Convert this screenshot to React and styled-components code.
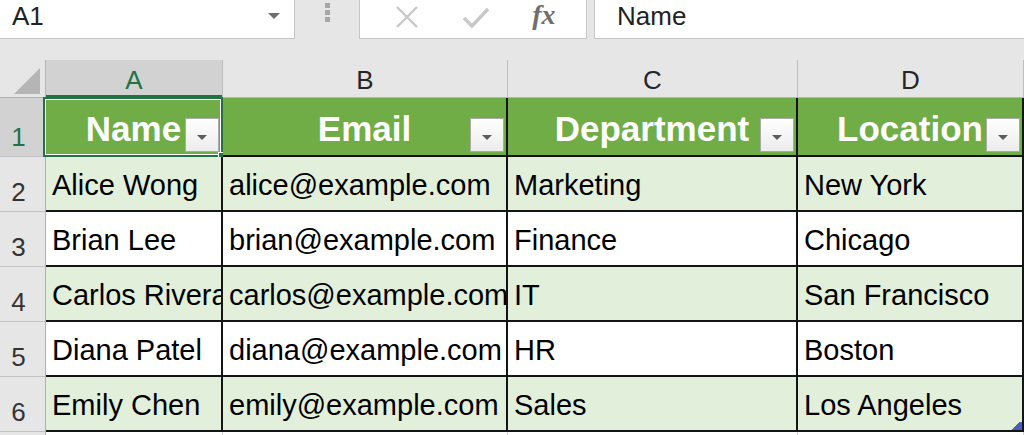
import React from "react"
import styled, { createGlobalStyle } from "styled-components"

const Global = createGlobalStyle`
body{
  margin:0;
  background:#e6e6e6;
  font-family:"Liberation Sans", Arial, sans-serif;
  overflow:hidden;
}
`

const COLS = "46px 177px 285px 290px 1fr"

const Page = styled.div`
width:1024px;
height:435px;
overflow:hidden;
background:#e6e6e6;
`

const FormulaBar = styled.div`
height:39px;
display:flex;
align-items:stretch;
margin-bottom:21px;
`
const NameBox = styled.div`
width:295px;
background:#fff;
border-right:1px solid #c6c6c6;
border-bottom:1px solid #c6c6c6;
display:flex;
align-items:center;
justify-content:space-between;
padding:0 14px 5px 12px;
box-sizing:border-box;
font-size:26px;
color:#222;
`
const Caret = styled.span`
width:0;
height:0;
border-left:6px solid transparent;
border-right:6px solid transparent;
border-top:6px solid #6e6e6e;
margin-top:-2px;
`
const Grip = styled.div`
width:64px;
display:flex;
flex-direction:column;
align-items:center;
gap:2px;
padding-top:3px;
span{
  width:5px;
  height:5px;
  background:#a6a6a6;
}
`
const ButtonBox = styled.div`
width:228px;
background:#fff;
border:1px solid #c6c6c6;
border-top:none;
display:flex;
align-items:center;
justify-content:space-around;
padding:0 10px 5px 14px;
box-sizing:border-box;
`
const FxButton = styled.span`
font-family:"Liberation Serif", "Times New Roman", serif;
font-style:italic;
font-weight:bold;
font-size:28px;
color:#6f6f6f;
margin-top:-4px;
`
const FormulaInput = styled.div`
flex:1;
margin-left:7px;
background:#fff;
border-left:1px solid #c6c6c6;
border-bottom:1px solid #c6c6c6;
display:flex;
align-items:center;
padding:0 0 5px 22px;
font-size:26px;
color:#222;
`

const ColHeaders = styled.div`
display:grid;
grid-template-columns:${COLS};
height:38px;
border-bottom:1px solid #b4b4b4;
box-sizing:border-box;
`
const Corner = styled.div`
position:relative;
border-right:1px solid #b4b4b4;
&::after{
  content:"";
  position:absolute;
  left:14px;
  top:8px;
  border-left:26px solid transparent;
  border-bottom:26px solid #b5b5b5;
}
`
const ColHead = styled.div`
display:flex;
align-items:center;
justify-content:center;
padding-top:3px;
font-size:26px;
color:${p => (p.$active ? "#217346" : "#262626")};
background:${p => (p.$active ? "#d2d2d2" : "#e6e6e6")};
border-right:1px solid #bdbdbd;
box-sizing:border-box;
box-shadow:${p => (p.$active ? "inset 0 -2px 0 #217346" : "none")};
`

const Row = styled.div`
display:grid;
grid-template-columns:${COLS};
height:${p => p.$h}px;
`
const RowHead = styled.div`
display:flex;
align-items:flex-end;
justify-content:center;
padding:0 8px 3px 0;
box-sizing:border-box;
font-size:26px;
color:${p => (p.$active ? "#217346" : "#333")};
background:${p => (p.$active ? "#d2d2d2" : "#e6e6e6")};
border-right:1px solid #b0b0b0;
border-bottom:1px solid #c2c2c2;
`
const HeadCell = styled.div`
position:relative;
display:flex;
align-items:flex-end;
justify-content:center;
padding-bottom:6px;
box-sizing:border-box;
background:#70ad47;
color:#fff;
font-weight:bold;
font-size:35px;
line-height:40px;
white-space:nowrap;
border-right:2px solid #141414;
border-bottom:2px solid #141414;
`
const HeadLabel = styled.span`
position:relative;
`
const Filter = styled.span`
position:absolute;
right:2px;
bottom:3px;
width:34px;
height:34px;
box-sizing:border-box;
border:1px solid #a9a9a9;
background:linear-gradient(#ffffff, #ececec);
display:flex;
align-items:center;
justify-content:center;
&::after{
  content:"";
  border-left:5px solid transparent;
  border-right:5px solid transparent;
  border-top:5px solid #5c5c5c;
  margin-top:4px;
}
`
const Cell = styled.div`
position:relative;
display:flex;
align-items:flex-end;
padding:0 0 8px 6px;
box-sizing:border-box;
background:${p => (p.$band ? "#e2efda" : "#ffffff")};
color:#000;
font-size:29px;
line-height:33px;
white-space:nowrap;
overflow:hidden;
border-right:2px solid #141414;
border-bottom:2px solid #141414;
`
const Selection = styled.span`
position:absolute;
top:-1px;
left:-3px;
right:-2px;
bottom:-2px;
border:2px solid #217346;
box-shadow:inset 0 0 0 1px #fff;
pointer-events:none;
`
const FillHandle = styled.span`
position:absolute;
right:-6px;
bottom:-6px;
width:7px;
height:7px;
background:#217346;
border:1px solid #fff;
`
const ResizeMark = styled.span`
position:absolute;
right:0;
bottom:0;
width:12px;
height:8px;
background:linear-gradient(135deg, transparent 50%, #4b5db8 50%);
`
const BottomStrip = styled.div`
display:grid;
grid-template-columns:${COLS};
height:4px;
div:first-child{ border-right:1px solid #b0b0b0; }
div:not(:first-child){ background:#fff; border-right:1px solid #d4d4d4; }
`

const headers = ["Name", "Email", "Department", "Location"]
const people = [
  ["Alice Wong", "alice@example.com", "Marketing", "New York"],
  ["Brian Lee", "brian@example.com", "Finance", "Chicago"],
  ["Carlos Rivera", "carlos@example.com", "IT", "San Francisco"],
  ["Diana Patel", "diana@example.com", "HR", "Boston"],
  ["Emily Chen", "emily@example.com", "Sales", "Los Angeles"],
]

function Cross(){
  return (
    <svg width="26" height="26" viewBox="0 0 26 26">
      <path d="M3 3 L23 23 M23 3 L3 23" stroke="#c8c8c8" strokeWidth="2.4" fill="none" />
    </svg>
  )
}
function Check(){
  return (
    <svg width="30" height="26" viewBox="0 0 30 26">
      <path d="M3 14 L11 22 L27 5" stroke="#c8c8c8" strokeWidth="3.4" fill="none" />
    </svg>
  )
}

export default function App(){
  return (
    <Page>
      <Global />
      <FormulaBar>
        <NameBox>A1<Caret /></NameBox>
        <Grip><span /><span /><span /></Grip>
        <ButtonBox><Cross /><Check /><FxButton>fx</FxButton></ButtonBox>
        <FormulaInput>Name</FormulaInput>
      </FormulaBar>

      <ColHeaders>
        <Corner />
        {["A", "B", "C", "D"].map((l, i) => (
          <ColHead key={l} $active={i === 0}>{l}</ColHead>
        ))}
      </ColHeaders>

      <Row $h={59}>
        <RowHead $active>1</RowHead>
        {headers.map((h, i) => (
          <HeadCell key={h}>
            <HeadLabel>{h}</HeadLabel>
            <Filter />
            {i === 0 && <Selection><FillHandle /></Selection>}
          </HeadCell>
        ))}
      </Row>

      {people.map((p, r) => (
        <Row key={p[0]} $h={55}>
          <RowHead>{r + 2}</RowHead>
          {p.map((v, c) => (
            <Cell key={c} $band={r % 2 === 0}>
              {v}
              {r === people.length - 1 && c === 3 && <ResizeMark />}
            </Cell>
          ))}
        </Row>
      ))}
      <BottomStrip><div /><div /><div /><div /><div /></BottomStrip>
    </Page>
  )
}
